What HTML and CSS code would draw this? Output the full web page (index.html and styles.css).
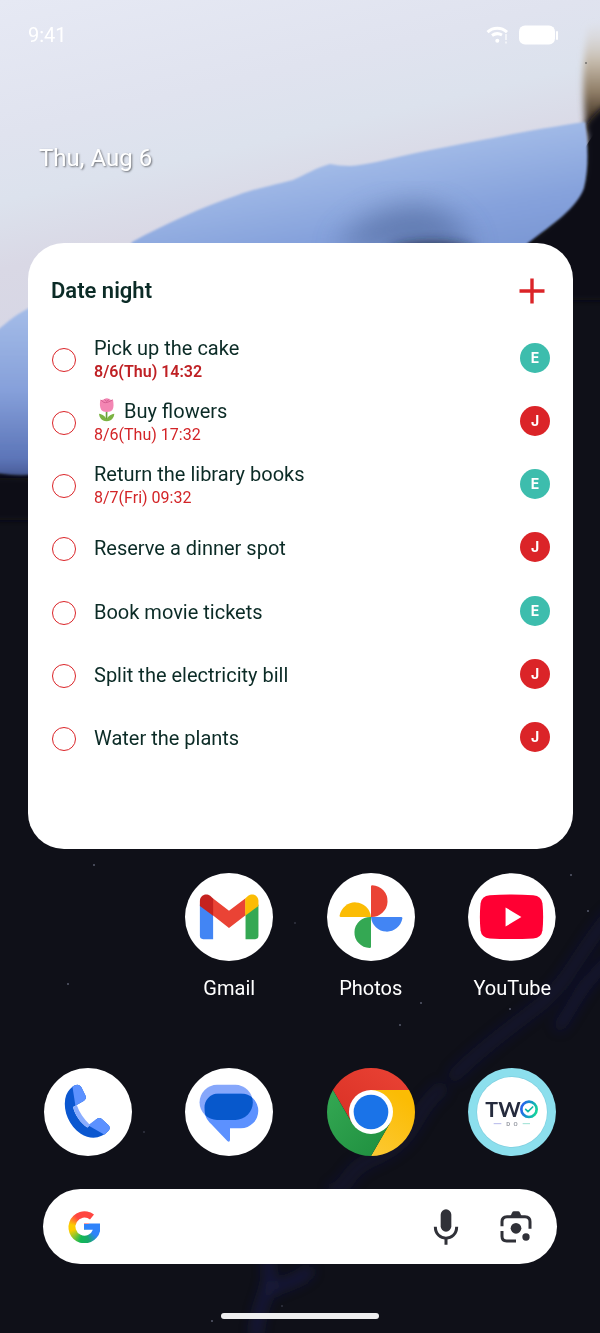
FILE: index.html
```html
<!DOCTYPE html>
<html lang="en">
<head>
<meta charset="utf-8">
<meta name="viewport" content="width=device-width, initial-scale=1">
<title>Home screen</title>
<link rel="stylesheet" href="styles.css">
</head>
<body>
<main class="screen">
  <svg class="wallpaper" viewBox="0 0 600 1333" preserveAspectRatio="none" aria-hidden="true">
    <defs>
      <linearGradient id="sky" x1="0" y1="0" x2="0.35" y2="1">
        <stop offset="0" stop-color="#e6e9f4"/><stop offset="0.3" stop-color="#e0e3ef"/><stop offset="0.45" stop-color="#dce2ed"/><stop offset="0.6" stop-color="#d9d8e5"/><stop offset="1" stop-color="#d3d4e4"/>
      </linearGradient>
      <linearGradient id="wave" gradientUnits="userSpaceOnUse" x1="300" y1="150" x2="345" y2="400">
        <stop offset="0" stop-color="#a9c1ea"/><stop offset="0.35" stop-color="#86a2dc"/><stop offset="1" stop-color="#5f7cc0"/>
      </linearGradient>
      <linearGradient id="waveLeft" x1="0" y1="0" x2="0" y2="1">
        <stop offset="0" stop-color="#a5bde8"/><stop offset="0.5" stop-color="#86a0da"/><stop offset="0.9" stop-color="#5c75b8"/><stop offset="1" stop-color="#4a5c98"/>
      </linearGradient>
      <linearGradient id="earth" x1="0" y1="0" x2="0" y2="1">
        <stop offset="0" stop-color="#ddd8d4" stop-opacity="0"/><stop offset="0.35" stop-color="#c4b9aa"/><stop offset="0.6" stop-color="#8f7d66"/><stop offset="0.8" stop-color="#4c3d2e"/><stop offset="1" stop-color="#0f1018"/>
      </linearGradient>
      <filter id="soft1" x="-10%" y="-10%" width="120%" height="120%"><feGaussianBlur stdDeviation="1"/></filter>
      <filter id="soft3" x="-30%" y="-30%" width="160%" height="160%"><feGaussianBlur stdDeviation="3"/></filter>
      <filter id="soft6" x="-50%" y="-50%" width="200%" height="200%"><feGaussianBlur stdDeviation="6"/></filter>
      <filter id="soft14" x="-50%" y="-50%" width="200%" height="200%"><feGaussianBlur stdDeviation="14"/></filter>
    </defs>
    <rect width="600" height="1333" fill="#0f1018"/>
    <path d="M0 0H600V125L520 245L300 400H0Z" fill="url(#sky)"/>
    <path d="M588 26C582 60 582 90 586 130L620 140V20Z" fill="url(#earth)" filter="url(#soft3)"/>
    <path d="M586 126C588 145 588 160 587 172C583 200 553 224 528 244L460 300H620V98C602 106 592 116 586 126Z" fill="#0f1018" filter="url(#soft3)"/>
    <path d="M585 122C550 127 522 132 493 138C460 144 430 150 407 155C390 159 365 165 350 166C342 166 336 165 330 164C315 168 305 175 293 180C270 186 250 190 238 195C200 208 165 224 132 242L110 300H470L528 243C553 224 577 208 584 188C589 168 588 145 585 122Z" fill="url(#wave)" filter="url(#soft1)"/>
    <path d="M335 250C350 225 375 208 415 204C455 208 463 230 475 250Z" fill="#465e91" opacity="0.55" filter="url(#soft14)"/>
    <ellipse cx="432" cy="254" rx="44" ry="12" fill="#151c32" opacity="0.75" filter="url(#soft6)"/>
    <path d="M-5 332C8 322 18 312 34 306V474C20 477 8 475 -5 473Z" fill="url(#waveLeft)" filter="url(#soft1)"/>
    <path d="M-15 479C10 475 22 481 50 477V520H-15Z" fill="#0f1018" filter="url(#soft3)"/>
    <g fill="none" stroke="#262b80" stroke-linecap="round" filter="url(#soft6)">
      <path d="M610 915C580 950 570 980 540 1005C510 1028 480 1050 455 1075" stroke-width="14" opacity="0.2"/>
      <path d="M610 960C580 985 572 1010 560 1025" stroke-width="12" opacity="0.24"/>
      <path d="M440 1090C410 1115 420 1140 370 1160C345 1172 350 1185 335 1190" stroke-width="16" opacity="0.17"/>
      <path d="M268 1262C274 1290 258 1300 256 1333M272 1290C285 1282 298 1282 308 1272" stroke-width="11" opacity="0.34"/>
    </g>
    <g fill="#7e8298" opacity="0.65">
      <circle cx="94" cy="865" r="1"/><circle cx="421" cy="1003" r="1"/><circle cx="588" cy="911" r="1"/><circle cx="68" cy="984" r="1"/><circle cx="510" cy="1009" r="1"/><circle cx="400" cy="1025" r="1"/><circle cx="212" cy="1321" r="1"/><circle cx="571" cy="875" r="1"/><circle cx="586" cy="63" r="1" fill="#444"/>
      <g opacity="0.5"><circle cx="295" cy="923" r="1"/><circle cx="144" cy="1132" r="1"/><circle cx="282" cy="1306" r="1"/></g>
    </g>
  </svg>

  <header class="status">
    <time>9:41</time>
    <div class="status-icons">
      <svg width="23" height="18" viewBox="0 0 23 18" role="img" aria-label="Wi-Fi">
        <path d="M1.500 6.200C7 1 15.500 1 21 6.200" fill="none" stroke="#fff" stroke-width="3"/>
        <path d="M6 9.500C9 7.300 13 7.300 16 9" fill="none" stroke="#fff" stroke-width="3"/>
        <circle cx="11.300" cy="14.800" r="2" fill="#fff"/>
        <path d="M20 8v6M20 15.500v2" stroke="#fff" stroke-width="1.500" opacity="0.8"/>
      </svg>
      <svg width="40" height="20" viewBox="0 0 40 20" role="img" aria-label="Battery full">
        <rect x="0" y="0.500" width="36" height="19" rx="6" fill="#fff"/><rect x="37" y="6" width="2" height="9" rx="1" fill="#fff"/>
      </svg>
    </div>
  </header>

  <p class="date">Thu, Aug 6</p>

  <section class="widget" aria-labelledby="list-title">
    <div class="widget-head">
      <h1 id="list-title">Date night</h1>
      <button class="add" type="button" aria-label="Add task"><svg width="26" height="26" viewBox="0 0 26 26" aria-hidden="true"><path d="M13 0.500V25.500M0.500 13H25.500" stroke="#db2428" stroke-width="3.400"/></svg></button>
    </div>
    <ul class="tasks">
      <li class="task"><input type="checkbox" id="t1"><label for="t1"><span class="name">Pick up the cake</span><span class="due today">8/6(Thu) 14:32</span></label><span class="avatar teal">E</span></li>
      <li class="task"><input type="checkbox" id="t2"><label for="t2"><span class="name"><svg class="tulip" width="25" height="24" viewBox="282 493 75 72" role="img" aria-label="Tulip"><path d="M320 558C319 545 320 538 320 528" stroke="#689f38" stroke-width="5" fill="none"/><path d="M320 563C304 561 298 551 297 540C308 541 317 549 320 557C323 549 332 541 343 540C342 551 336 561 320 563Z" fill="#7cb342"/><path d="M301 499C306 500 309 498 313 497C317 493 324 493 328 497C332 498 335 500 339 498C341 510 342 521 337 529C332 537 309 537 304 529C299 521 299 510 301 499Z" fill="#f386b3"/><path d="M302 499C309 503 309 507 316 507C322 507 331 503 338 498M313 497L320 503L328 497" fill="none" stroke="#d0588b" stroke-width="2.500"/></svg> Buy flowers</span><span class="due">8/6(Thu) 17:32</span></label><span class="avatar red">J</span></li>
      <li class="task"><input type="checkbox" id="t3"><label for="t3"><span class="name">Return the library books</span><span class="due">8/7(Fri) 09:32</span></label><span class="avatar teal">E</span></li>
      <li class="task"><input type="checkbox" id="t4"><label for="t4"><span class="name">Reserve a dinner spot</span></label><span class="avatar red">J</span></li>
      <li class="task"><input type="checkbox" id="t5"><label for="t5"><span class="name">Book movie tickets</span></label><span class="avatar teal">E</span></li>
      <li class="task"><input type="checkbox" id="t6"><label for="t6"><span class="name">Split the electricity bill</span></label><span class="avatar red">J</span></li>
      <li class="task"><input type="checkbox" id="t7"><label for="t7"><span class="name">Water the plants</span></label><span class="avatar red">J</span></li>
    </ul>
  </section>

  <nav class="apps" aria-label="Apps">
    <a class="app second" href="#gmail">
      <svg class="icon" viewBox="45 37 266 266" aria-hidden="true">
        <circle cx="178" cy="170" r="133" fill="#fff"/>
        <path d="M90 132V227Q90 237 100 237H130V160Z" fill="#4285f4"/>
        <path d="M267 132V227Q267 237 257 237H228V160Z" fill="#34a853"/>
        <path d="M129 113L178 151L228 113V165L178 203L129 165Z" fill="#ea4335"/>
        <path d="M90 121C90 104 109 96 121 106L130 114V166L90 137Z" fill="#c5221f"/>
        <path d="M267 121C267 104 248 96 236 106L227 114V166L267 137Z" fill="#fbbc04"/>
      </svg>
      <span>Gmail</span>
    </a>
    <a class="app" href="#photos">
      <svg class="icon" viewBox="469 37 266 266" aria-hidden="true">
        <circle cx="602" cy="170" r="133" fill="#fff"/>
        <path d="M602 78Q602 74 606 74A48 48 0 0 1 602 170Z" fill="#ea4335"/>
        <path d="M511 170Q507 170 507 166A48 49 0 0 1 602 170Z" fill="#fbbc04"/>
        <path d="M693 170Q697 170 697 174A48 49 0 0 1 602 170Z" fill="#4285f4"/>
        <path d="M602 260Q602 264 598 264A48 47 0 0 1 602 170Z" fill="#34a853"/>
      </svg>
      <span>Photos</span>
    </a>
    <a class="app" href="#youtube">
      <svg class="icon" viewBox="114 37 267 266" aria-hidden="true">
        <circle cx="247" cy="170" r="133" fill="#fff"/>
        <path d="M180 104Q246 99 312 104Q337 106 340 129Q344 170 340 210Q337 233 312 235Q246 239 180 235Q155 233 152 210Q148 170 152 129Q155 106 180 104Z" fill="#ff0033"/>
        <path d="M228 141L276 170L228 199Z" fill="#fff"/>
      </svg>
      <span>YouTube</span>
    </a>
  </nav>

  <nav class="apps dock" aria-label="Dock">
    <a class="app" href="#phone" aria-label="Phone">
      <svg class="icon" viewBox="39 39 266 266" aria-hidden="true">
        <circle cx="172" cy="172" r="133" fill="#fff"/>
        <path d="M125 96C134 87 147 87 152 97L165 124Q168 132 160 138L127 157C132 181 150 206 170 219L197 194Q206 187 214 193L235 213Q241 221 234 229C214 252 180 257 150 238C115 214 97 171 103 133C106 116 115 104 125 96Z" fill="#0b57d0"/>
        <path d="M125 96C134 87 147 87 152 97L165 124Q168 132 160 138L134 153Z" fill="#5c91ff"/>
        <path d="M172 212L197 194Q206 187 214 193L235 213Q241 221 234 229L222 241Z" fill="#5c91ff"/>
        <path d="M127 157L138 151C146 174 159 193 178 211L170 219C148 203 133 182 127 157Z" fill="#8aadff"/>
      </svg>
    </a>
    <a class="app" href="#messages" aria-label="Messages">
      <svg class="icon" viewBox="465 39 266 266" aria-hidden="true">
        <defs><clipPath id="bubble"><path d="M565 116H634A52 52 0 0 1 634 221H601V257Q600 265 593 260L544 208C531 196 524 184 524 160A42 42 0 0 1 565 116Z"/></clipPath></defs>
        <circle cx="598" cy="172" r="133" fill="#fff"/>
        <rect x="509" y="90" width="161" height="106" rx="53" fill="#86a7fb"/>
        <path d="M565 116H634A52 52 0 0 1 634 221H601V257Q600 265 593 260L544 208C531 196 524 184 524 160A42 42 0 0 1 565 116Z" fill="#5c91ff"/>
        <rect x="509" y="90" width="161" height="106" rx="53" fill="#0758cc" clip-path="url(#bubble)"/>
      </svg>
    </a>
    <a class="app" href="#chrome" aria-label="Chrome">
      <svg class="icon" viewBox="51 39 264 264" aria-hidden="true">
        <defs>
          <linearGradient id="cr" x1="0" y1="1" x2="1" y2="0"><stop offset="0" stop-color="#d93025"/><stop offset="1" stop-color="#ea4335"/></linearGradient>
          <linearGradient id="cy" x1="0" y1="1" x2="0.500" y2="0"><stop offset="0" stop-color="#fcc934"/><stop offset="1" stop-color="#fbbc04"/></linearGradient>
          <linearGradient id="cg" x1="1" y1="1" x2="0" y2="0"><stop offset="0" stop-color="#1e8e3e"/><stop offset="1" stop-color="#34a853"/></linearGradient>
        </defs>
        <path d="M68.700 105A132 132 0 0 1 297.300 105H183V171L125.800 204Z" fill="url(#cr)"/>
        <path d="M297.300 105A132 132 0 0 1 183 303L240 204L183 171V105Z" fill="url(#cy)"/>
        <path d="M183 303A132 132 0 0 1 68.700 105L125.800 204L183 171L240 204Z" fill="url(#cg)"/>
        <circle cx="183" cy="171" r="66" fill="#fff"/><circle cx="183" cy="171" r="52" fill="#1a73e8"/>
      </svg>
    </a>
    <a class="app" href="#twodo" aria-label="Two Do">
      <svg class="icon" viewBox="476 39 264 264" aria-hidden="true">
        <defs>
          <linearGradient id="ring" x1="0" y1="0.300" x2="1" y2="0.600"><stop offset="0.050" stop-color="#2563eb"/><stop offset="0.500" stop-color="#1298c8"/><stop offset="1" stop-color="#16d49b"/></linearGradient>
        </defs>
        <circle cx="608" cy="171" r="132" fill="#8cdfed"/><circle cx="608" cy="171" r="107" fill="#7fcfdf"/><circle cx="608" cy="171" r="105" fill="#fff"/>
        <text class="logo-word" x="528" y="186">TW</text>
        <circle cx="659" cy="163" r="23" fill="none" stroke="url(#ring)" stroke-width="8"/>
        <path d="M649 163L656 170L670 156" fill="none" stroke="#14b8a6" stroke-width="5" stroke-linecap="round" stroke-linejoin="round"/>
        <text class="logo-sub" x="597" y="213" text-anchor="middle">D</text>
        <text class="logo-sub" x="619" y="213" text-anchor="middle">O</text>
        <path d="M553 206H576" stroke="#b5b8ea" stroke-width="3"/><path d="M640 206H662" stroke="#9ce0d4" stroke-width="3"/>
      </svg>
    </a>
  </nav>

  <form class="search" role="search">
    <span class="google"></span>
    <input type="search" aria-label="Search">
    <button type="button" aria-label="Voice search"><svg width="26" height="36" viewBox="308 100 78 108" aria-hidden="true"><rect x="331" y="101" width="32" height="67" rx="16" fill="#303138"/><path d="M315 153C315 199 379 199 379 153M347 188V207" fill="none" stroke="#303138" stroke-width="9"/></svg></button>
    <button type="button" aria-label="Lens search"><svg width="32" height="32" viewBox="509 106 96 96" aria-hidden="true"><path d="M515 152V138Q515 123 530 123H584Q599 123 599 138V159M515 166V182Q515 196 529 196H557" fill="none" stroke="#303138" stroke-width="9"/><path d="M539 124L545 111Q547 107 551 107H563Q567 107 569 111L575 124Z" fill="#303138"/><circle cx="557" cy="158" r="16" fill="#303138"/><circle cx="587" cy="184" r="11" fill="#303138"/></svg></button>
  </form>
  <div class="home-bar"></div>
</main>
</body>
</html>
```
FILE: styles.css
```css
* { box-sizing: border-box; }

body {
  margin: 0;
  font-family: Roboto, "Noto Sans", sans-serif;
  background: #0f1018;
}

.screen {
  position: relative;
  isolation: isolate;
  display: flex;
  flex-direction: column;
  min-height: 100vh;
  overflow: hidden;
}

.wallpaper {
  position: absolute;
  inset: 0;
  z-index: -1;
  width: 100%;
  height: 100%;
}

.status {
  display: flex;
  align-items: center;
  justify-content: space-between;
  height: 70px;
  padding: 0 41px 0 28px;
  color: #fff;
  font-size: 20px;
}

.status-icons {
  display: flex;
  align-items: center;
  gap: 10px;
}

.date {
  margin: 72px 39px 0;
  color: #fff;
  font-size: 24px;
  line-height: 32px;
  text-shadow: 1px 1px 2px rgba(0, 0, 0, 0.5);
}

.widget {
  min-height: 606px;
  margin: 69px 27px 0 28px;
  padding: 24px 23px 0;
  border-radius: 36px;
  background: #fff;
  color: #0b2b26;
}

.widget-head {
  display: flex;
  align-items: center;
  justify-content: space-between;
  height: 47px;
  margin-bottom: 14px;
}

.widget-head h1 {
  margin: 0;
  font-size: 22px;
  font-weight: 600;
  line-height: 28px;
}

button {
  display: grid;
  place-items: center;
  padding: 0;
  border: 0;
  background: none;
}

.add { width: 36px; height: 36px; }

.tasks {
  display: grid;
  grid-auto-rows: 1fr;
  min-height: 443px;
  margin: 0;
  padding: 0;
  list-style: none;
}

.task {
  display: flex;
  align-items: center;
}

.task input {
  appearance: none;
  flex: none;
  width: 24px;
  height: 24px;
  margin: 0 0 0 1px;
  border: 1px solid #db2428;
  border-radius: 50%;
}

.task input:checked { background: #db2428; }

.task label {
  flex: 1;
  margin-left: 18px;
  padding-bottom: 2px;
}

.name {
  display: block;
  font-size: 20px;
  line-height: 26px;
}

.tulip { vertical-align: -4px; }

.due {
  display: block;
  color: #d32427;
  font-size: 16px;
  line-height: 22px;
}

.today {
  color: #bf2024;
  font-weight: 600;
}

.avatar {
  flex: none;
  width: 30px;
  margin-bottom: 4px;
  border-radius: 50%;
  color: #fff;
  font-family: Inter, sans-serif;
  font-size: 14px;
  font-weight: 700;
  line-height: 30px;
  text-align: center;
}

.teal { background: #3dbdad; }
.red { background: #db2428; }

.apps {
  display: grid;
  grid-template-columns: repeat(4, 1fr);
  margin-top: 24px;
  padding: 0 17px;
}

.app {
  display: flex;
  flex-direction: column;
  align-items: center;
  gap: 14px;
  color: #fff;
  font-size: 20px;
  line-height: 26px;
  text-decoration: none;
}

.second { grid-column-start: 2; }

.icon { width: 88px; height: 88px; }

.dock { margin-top: 67px; }

.logo-word {
  fill: #252b3d;
  font-family: Lato, sans-serif;
  font-size: 64px;
  font-weight: 700;
}

.logo-sub {
  fill: #8b8f99;
  font-size: 18px;
  font-weight: 500;
}

.search {
  display: flex;
  align-items: center;
  height: 75px;
  margin: 33px 43px 0;
  padding: 0 25px;
  border-radius: 38px;
  background: #fff;
}

.search input {
  flex: 1;
  min-width: 0;
  height: 48px;
  margin: 0 12px;
  border: 0;
  outline: 0;
  background: none;
  font: inherit;
  font-size: 20px;
}

.search button + button { margin-left: 41px; }

.google {
  width: 32px;
  height: 32px;
  background:
    linear-gradient(#2f83fa, #2f83fa) 16px 13px / 16px 6px no-repeat,
    conic-gradient(#ff4641 0deg 55deg, #2f83fa 56deg 125deg, #18a96b 160deg, #12b955 195deg, #8ac42e 225deg, #fccc00 255deg 280deg, #ff7a2a 305deg, #ff4641 325deg);
  clip-path: path("M26 4A16 16 0 1 0 32 13H16V19H25A9 9 0 1 1 22 9Z");
}

.home-bar {
  align-self: center;
  width: 158px;
  height: 6px;
  margin: 49px 0 14px;
  border-radius: 3px;
  background: #eeeeef;
}
```
